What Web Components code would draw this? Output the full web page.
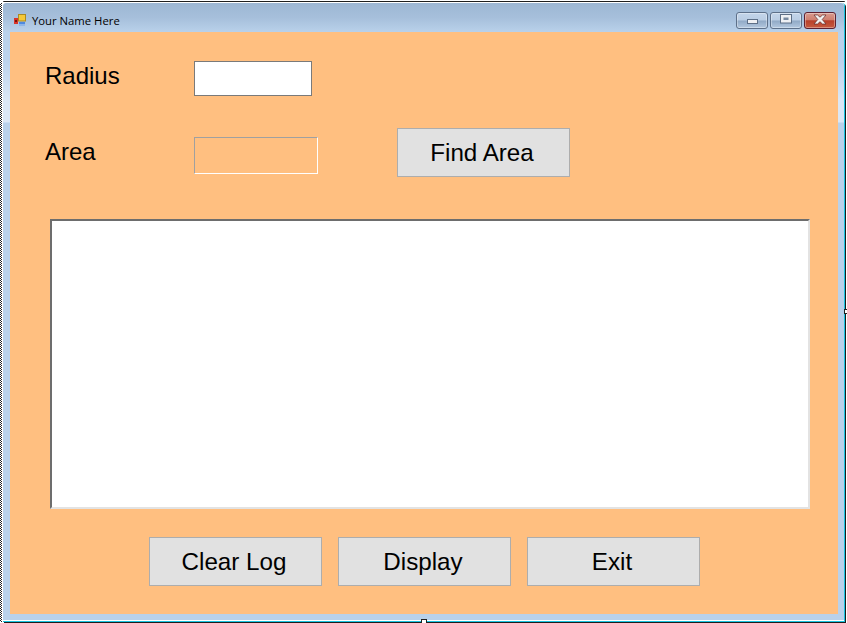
<!DOCTYPE html>
<html><head><meta charset="utf-8"><title>Your Name Here</title>
<style>
html,body{margin:0;padding:0;background:#fff}
body{width:847px;height:623px;overflow:hidden;font-family:"Liberation Sans",Arial,sans-serif}
</style></head><body>
<win-window caption="Your Name Here">
  <win-row style="height:35px;margin-top:29px">
    <win-label style="width:148px;margin-left:-1px;padding-right:1px">Radius</win-label>
    <win-input></win-input>
  </win-row>
  <win-row style="height:49px;margin-top:32px">
    <win-label style="width:148px;padding-top:9px;margin-left:-1px;padding-right:1px">Area</win-label>
    <win-input readonly></win-input>
    <win-button style="margin-left:79px;">Find Area</win-button>
  </win-row>
  <win-log></win-log>
  <win-row style="height:49px;margin-top:28px;padding-left:103px;gap:16px">
    <win-button>Clear Log</win-button>
    <win-button>Display</win-button>
    <win-button>Exit</win-button>
  </win-row>
</win-window>
<script>
function def(name,html,init){
  customElements.define(name,class extends HTMLElement{
    constructor(){super();const r=this.attachShadow({mode:'open'});r.innerHTML=html;}
    connectedCallback(){if(init)init(this,this.shadowRoot);}
  });
}
def('win-window',`<style>
:host{display:block;position:relative;width:847px;height:623px;box-sizing:border-box;padding-top:1px}
.topline{height:1px;background:#1f1f1f;margin:0 2px 1px 3px;border-radius:2px 2px 0 0}
.shell{display:flex;height:619px}
.dots{width:2px;margin-right:1px;background:repeating-conic-gradient(#222 0 25%,#fff 0 50%) 0 0/2px 2px}
.win{width:842px;height:619px;box-sizing:border-box;display:flex;flex-direction:column;box-shadow:1px 1px 0 #1c1c1c;border-right:1px solid #19c4e0;border-bottom:1px solid #19c4e0;border-top-left-radius:3px;border-top-right-radius:3px;overflow:visible}
.body{display:flex;height:582px}
.edgeL{width:7px;background:linear-gradient(#b9d1ea 0,#bcd3ec 30px,#dbe7f5 68px,#dbe7f5 90px,#b9d1ea 91px)}
.edgeR{width:6px;background:linear-gradient(#b9d1ea 0,#bcd3ec 30px,#dbe7f5 68px,#dbe7f5 90px,#b9d1ea 91px)}
.form{width:828px;height:582px;box-sizing:border-box;background:#ffbf80;padding-left:36px}
.edgeB{height:6px;background:#b9d1ea}
.grip{position:absolute;background:#fff;border:1px solid #222;box-sizing:border-box;width:6px;height:5px}
.grip.r{left:844px;top:309px}
.grip.b{left:421px;top:619px}
</style>
<div class="topline"></div>
<div class="shell"><div class="dots"></div>
<div class="win">
  <win-titlebar></win-titlebar>
  <div class="body"><div class="edgeL"></div><div class="form"><slot></slot></div><div class="edgeR"></div></div>
  <div class="edgeB"></div>
</div></div>
<div class="grip r"></div><div class="grip b"></div>`,
(h,r)=>{r.querySelector('win-titlebar').setAttribute('caption',h.getAttribute('caption'));});
def('win-titlebar',`<style>
:host{display:flex;align-items:center;height:29px;box-sizing:border-box;padding:5px 8px 0 11px;background:linear-gradient(#9db7d4,#a6bfdb 50%,#b9d1ea);border-radius:3px 3px 0 0}
svg{width:13px;height:14px;margin-right:5px;flex:none}
.t{font:11.3px "Open Sans","Noto Sans",sans-serif;color:#000;white-space:nowrap;flex:1}
.btns{display:flex;gap:2px;margin-top:1px}
</style>
<svg viewBox="0 0 13 14"><rect x="0" y="5" width="4" height="6" fill="#d8352a"/><rect x="1" y="7" width="2" height="2" fill="#7a100a"/><rect x="4.500" y="1.500" width="7" height="6.500" fill="#f5c838" stroke="#a98a24"/><rect x="5" y="9" width="6" height="4" fill="#4f8ade"/><rect x="5" y="11" width="6" height="2" fill="#8db5ea"/></svg>
<span class="t"></span>
<div class="btns"><win-capbtn kind="min"></win-capbtn><win-capbtn kind="max"></win-capbtn><win-capbtn kind="close"></win-capbtn></div>`,
(h,r)=>{r.querySelector('.t').textContent=h.getAttribute('caption');});
def('win-capbtn',`<style>
:host{display:block;width:32px;height:17px;box-sizing:border-box;border:1px solid #5d7089;border-radius:3px;background:linear-gradient(#c3d5ea 0,#bacde3 48%,#90a9c5 52%,#b3c8df 100%);box-shadow:inset 0 0 0 1px rgba(255,255,255,.35)}
:host([kind=close]){border-color:#5e2030;background:linear-gradient(#d99a8e 0,#cf7f6f 45%,#b8402a 52%,#c65a3f 100%)}
svg{display:block;width:30px;height:15px}
</style><svg viewBox="0 0 30 15"></svg>`,
(h,r)=>{
  const k=h.getAttribute('kind'),s=r.querySelector('svg');
  s.innerHTML= k==='min'?'<rect x="10.500" y="6.500" width="10" height="4" fill="#eef0f3" stroke="#5d6f86"/>'
   : k==='max'?'<rect x="9.500" y="1.500" width="11" height="8.500" fill="#eef0f3" stroke="#5d6f86"/><rect x="12.500" y="4.500" width="5" height="2.500" fill="#77899f"/>'
   : '<path d="M9 2h3.500l2.500 2.200L17.500 2H21l-3.800 4.500L21 11h-3.500L15 8.700 12.500 11H9l3.800-4.500z" fill="#f2f2f2" stroke="#5e2a2a" stroke-width=".7"/>';
});
def('win-row',`<style>:host{display:flex;align-items:flex-start}</style><slot></slot>`);
def('win-label',`<style>
:host{display:block;font:24px "Liberation Sans",Arial,sans-serif;color:#000;line-height:30px}
</style><slot></slot>`);
def('win-input',`<style>
:host{display:block;box-sizing:border-box;width:118px;height:35px;background:#fff;border:1px solid #7a7a7a}
:host([readonly]){width:124px;height:37px;margin-top:9px;background:#ffbf80;border-color:#a0a0a0 #fff #fff #a0a0a0}
</style>`);
def('win-button',`<style>
:host{display:flex;align-items:center;justify-content:center;box-sizing:border-box;width:173px;height:49px;padding-right:3px;background:#e1e1e1;border:1px solid #adadad;font:24.2px "Liberation Sans",Arial,sans-serif;color:#000;white-space:nowrap}
</style><slot></slot>`);
def('win-log',`<style>
:host{display:block;box-sizing:border-box;width:760px;height:290px;margin:42px 0 0 4px;background:#fff;border-style:solid;border-width:2px;border-color:#6d6d6d #e3e3e3 #e3e3e3 #6d6d6d;outline:0}
</style>`);
</script>
</body></html>
